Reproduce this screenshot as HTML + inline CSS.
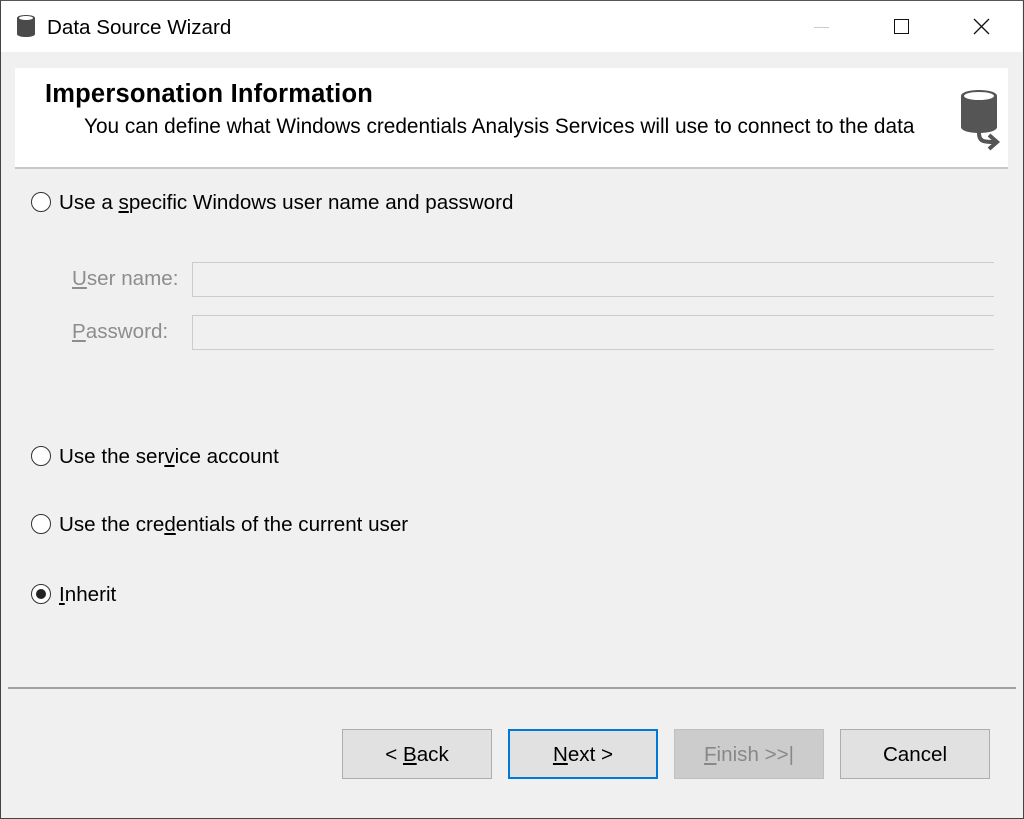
<!DOCTYPE html>
<html><head><style>
*{margin:0;padding:0;box-sizing:border-box}
body{width:1024px;height:819px;overflow:hidden;background:#f0f0f0;font-family:"Liberation Sans",sans-serif;color:#000;position:relative}
.win{position:absolute;left:0;top:0;width:1024px;height:819px;border:1px solid #444;border-top-color:#555}
.title{position:absolute;left:1px;top:1px;width:1021px;height:51px;background:#fff}
.t{position:absolute;font-size:20.6px;white-space:nowrap}
.hdr{position:absolute;left:15px;top:68px;width:993px;height:101px;background:#fff;border-bottom:2px solid #c8c8c8}
.radio{position:absolute;width:20px;height:20px;border:1px solid #333;border-radius:50%;background:#fff}
.radio.on::after{content:"";position:absolute;left:4px;top:4px;width:10px;height:10px;border-radius:50%;background:#222}
.box{position:absolute;left:192px;width:802px;height:35px;border:1px solid #ccc;border-right:none;background:#f0f0f0}
.lbl{position:absolute;font-size:20.6px;color:#8d8d8d}
.btn{position:absolute;top:729px;width:150px;height:50px;background:#e1e1e1;border:1px solid #adadad;font-size:20.6px;text-align:center;line-height:50px}
u{text-decoration:underline}
</style></head><body>
<div class="win"></div>
<div class="title"></div>
<svg style="position:absolute;left:16px;top:14px" width="20" height="24" viewBox="0 0 20 24"><path d="M1 4 C1 0,19 0,19 4 L19 20 C19 24,1 24,1 20 Z" fill="#4a4a4a"/><ellipse cx="10" cy="4" rx="7" ry="2" fill="#fff"/></svg>
<div class="t" style="left:47px;top:16px">Data Source Wizard</div>
<div style="position:absolute;left:814px;top:27px;width:15px;height:1px;background:#ccc"></div>
<div style="position:absolute;left:894px;top:19px;width:15px;height:15px;border:1px solid #111"></div>
<svg style="position:absolute;left:973px;top:18px" width="17" height="17"><path d="M1 1L16 16M16 1L1 16" stroke="#111" stroke-width="1.3"/></svg>
<div class="hdr"></div>
<div class="t" style="left:45px;top:80px;font-size:25.5px;font-weight:bold;letter-spacing:0.2px">Impersonation Information</div>
<div class="t" style="left:84px;top:115px;font-size:20.8px">You can define what Windows credentials Analysis Services will use to connect to the data</div>
<svg style="position:absolute;left:960px;top:89px" width="42" height="62" viewBox="0 0 42 62"><path d="M1 7 C1 -1,37 -1,37 7 L37 38 C37 46,1 46,1 38 Z" fill="#555"/><ellipse cx="19" cy="7" rx="15" ry="4" fill="#fff"/><path d="M19 44 C19 53,24 53,36 53" stroke="#555" stroke-width="4" fill="none"/><path d="M29 46 L37 53 L29 60" stroke="#555" stroke-width="4" fill="none"/></svg>
<div class="radio" style="left:31px;top:192px"></div>
<div class="t" style="left:59px;top:191px">Use a <u>s</u>pecific Windows user name and password</div>
<div class="lbl" style="left:72px;top:267px"><u>U</u>ser name:</div>
<div class="box" style="top:262px"></div>
<div class="lbl" style="left:72px;top:320px"><u>P</u>assword:</div>
<div class="box" style="top:315px"></div>
<div class="radio" style="left:31px;top:446px"></div>
<div class="t" style="left:59px;top:445px">Use the ser<u>v</u>ice account</div>
<div class="radio" style="left:31px;top:514px"></div>
<div class="t" style="left:59px;top:513px">Use the cre<u>d</u>entials of the current user</div>
<div class="radio on" style="left:31px;top:584px"></div>
<div class="t" style="left:59px;top:583px"><u>I</u>nherit</div>
<div style="position:absolute;left:8px;top:687px;width:1008px;height:2px;background:#a0a0a0"></div>
<div class="btn" style="left:342px">&lt; <u>B</u>ack</div>
<div class="btn" style="left:508px;border:2px solid #0078d7;line-height:48px"><u>N</u>ext &gt;</div>
<div class="btn" style="left:674px;background:#ccc;border-color:#bfbfbf;color:#888"><u>F</u>inish &gt;&gt;|</div>
<div class="btn" style="left:840px">Cancel</div>
</body></html>
